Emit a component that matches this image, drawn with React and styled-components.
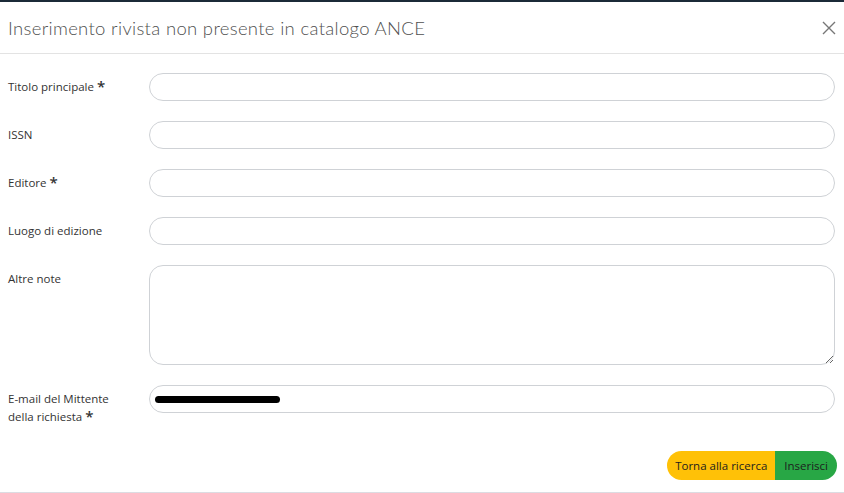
import React from "react";
import styled, { createGlobalStyle } from "styled-components";

const Global = createGlobalStyle`
  html, body { margin: 0; padding: 0; background: #fff; }
  body { font-family: "Open Sans", "Noto Sans", sans-serif; }
  * { box-sizing: border-box; }
`;

const Page = styled.div`
  width: 844px;
  height: 493px;
  display: flex;
  flex-direction: column;
  background: #fff;
  border-top: 2px solid #1b2a38;
  border-bottom: 1px solid #dcdce2;
  overflow: hidden;
`;

const Header = styled.div`
  height: 52px;
  display: flex;
  align-items: center;
  justify-content: space-between;
  padding: 0 8px 0 8px;
  border-bottom: 1px solid #e3e3e3;
`;

const Title = styled.h1`
  margin: 0;
  font-family: "Lato", "Noto Sans", sans-serif;
  font-weight: 300;
  font-size: 18.5px;
  color: #505050;
  letter-spacing: 0.32px;
`;

const Close = styled.button`
  border: 0;
  background: none;
  padding: 0;
  width: 14px;
  height: 14px;
  display: flex;
  cursor: pointer;
`;

const Form = styled.div`
  display: grid;
  grid-template-columns: 141px 1fr;
  row-gap: 20px;
  padding: 19px 9px 0 8px;
`;

const Label = styled.label`
  font-size: 11.5px;
  color: #333;
  line-height: 18px;
  padding-top: 5px;
  align-self: start;
`;

const Star = styled.span`
  font-size: 15px;
  font-weight: 600;
  line-height: 0;
  position: relative;
  top: 1px;
  margin-left: 3px;
`;

const Field = styled.div`
  position: relative;
`;

const Input = styled.input`
  width: 100%;
  height: 28px;
  border: 1px solid #cfd2d6;
  border-radius: 14px;
  padding: 0 12px;
  font-family: inherit;
  font-size: 12px;
  outline: none;
  display: block;
`;

const TextArea = styled.textarea`
  width: 100%;
  height: 100px;
  border: 1px solid #cfd2d6;
  border-radius: 14px;
  padding: 6px 12px;
  font-family: inherit;
  font-size: 12px;
  outline: none;
  display: block;
  resize: vertical;
`;

const Redaction = styled.div`
  position: absolute;
  left: 6px;
  top: 11px;
  width: 125px;
  height: 7px;
  border-radius: 4px;
  background: #000;
`;

const Footer = styled.div`
  display: flex;
  justify-content: flex-end;
  padding: 25px 7px 0 0;
`;

const Group = styled.div`
  display: flex;
  border-radius: 15px;
  overflow: hidden;
  height: 29px;
`;

const Btn = styled.button`
  border: 0;
  margin: 0;
  height: 100%;
  padding: 0 ${(p) => p.$pad};
  font-family: "Open Sans", "Noto Sans", sans-serif;
  font-size: 11.5px;
  color: #1d1d1d;
  background: ${(p) => p.$bg};
  cursor: pointer;
`;

const Fill = styled.div`
  flex: 1;
`;

export default function App() {
  return (
    <>
      <Global />
      <Page>
        <Header>
          <Title>Inserimento rivista non presente in catalogo ANCE</Title>
          <Close aria-label="Chiudi">
            <svg width="14" height="14" viewBox="0 0 14 14">
              <path d="M1 1L13 13M13 1L1 13" stroke="#777" strokeWidth="1.4" fill="none" />
            </svg>
          </Close>
        </Header>
        <Form>
          <Label>
            Titolo principale<Star>*</Star>
          </Label>
          <Field>
            <Input />
          </Field>
          <Label>ISSN</Label>
          <Field>
            <Input />
          </Field>
          <Label>
            Editore<Star>*</Star>
          </Label>
          <Field>
            <Input />
          </Field>
          <Label>Luogo di edizione</Label>
          <Field>
            <Input />
          </Field>
          <Label>Altre note</Label>
          <Field>
            <TextArea />
          </Field>
          <Label>
            E-mail del Mittente
            <br />
            della richiesta<Star>*</Star>
          </Label>
          <Field>
            <Input />
            <Redaction />
          </Field>
        </Form>
        <Footer>
          <Group>
            <Btn $bg="#ffc107" $pad="8px">Torna alla ricerca</Btn>
            <Btn $bg="#28a745" $pad="9px">Inserisci</Btn>
          </Group>
        </Footer>
        <Fill />
      </Page>
    </>
  );
}
